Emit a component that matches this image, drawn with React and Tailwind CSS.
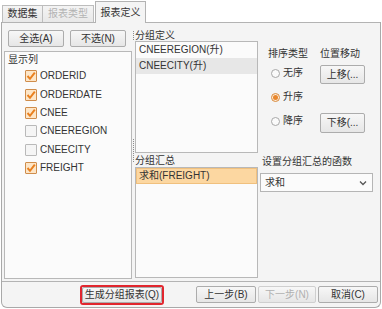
import React from 'react'

const FONT = { fontFamily: "'Liberation Sans', 'Noto Sans CJK SC', sans-serif" }

function Btn({ children, className = '', disabled }) {
  return (
    <div
      className={
        'flex items-center justify-center h-[17px] border rounded-[2px] bg-gradient-to-b from-[#f7f7f7] to-[#e6e6e6] ' +
        (disabled ? 'border-[#cfcfcf] text-[#b0b0b0] ' : 'border-[#acacac] text-[#333] ') +
        className
      }
    >
      {children}
    </div>
  )
}

function Check({ checked, label }) {
  return (
    <div className="flex items-center h-[18.4px] pl-[20px] gap-[3px]">
      {checked ? (
        <div className="w-[12px] h-[12px] border border-[#cf8d4c] bg-[#fde6c8] rounded-[1px] flex items-center justify-center">
          <svg width="10" height="10" viewBox="0 0 10 10">
            <path d="M1.5 5 L4 7.8 L8.8 1.6" stroke="#e9801f" strokeWidth="2" fill="none" />
          </svg>
        </div>
      ) : (
        <div className="w-[12px] h-[12px] border border-[#b9b9b9] bg-[#f5f5f5] rounded-[1px]" />
      )}
      <span className="text-[#333]">{label}</span>
    </div>
  )
}

function Radio({ checked, label }) {
  return (
    <div className="flex items-center h-[24px] pl-[3px] gap-[3px]">
      <div
        className={
          'w-[9px] h-[9px] rounded-full border flex items-center justify-center ' +
          (checked ? 'border-[#d98a3e] bg-[#fdebd6]' : 'border-[#a8a8a8] bg-[#fafafa]')
        }
      >
        {checked && <div className="w-[5px] h-[5px] rounded-full bg-[#e8862c]" />}
      </div>
      <span className="text-[#333]">{label}</span>
    </div>
  )
}

export default function App() {
  return (
    <div className="w-[382px] h-[309px] bg-white flex flex-col text-[10px] leading-[12px]" style={FONT}>
      {/* tabs */}
      <div className="h-[22px] flex items-end pl-[2px]">
        <div className="h-[17px] w-[41px] border border-b-0 border-[#bdbdbd] bg-gradient-to-b from-[#f4f4f4] to-[#e8e8e8] flex items-center justify-center text-[#333]">
          数据集
        </div>
        <div className="h-[17px] w-[51px] border border-l-0 border-b-0 border-[#bdbdbd] bg-gradient-to-b from-[#f4f4f4] to-[#e8e8e8] flex items-center justify-center text-[#b3b3b3]">
          报表类型
        </div>
        <div className="h-[22px] w-[51px] ml-[1px] -mb-px relative z-10 border border-b-0 border-[#b3b3b3] bg-[#f4f4f4] flex items-center justify-center text-[#333]">
          报表定义
        </div>
      </div>

      <div className="flex-1 ml-[1px] mr-[1px] mb-[1px] border-x border-b border-[#a9a9a9] rounded-b-[6px] bg-[#f4f4f4] flex flex-col">
        {/* tab panel */}
        <div className="h-[260px] border-t border-b border-[#b3b3b3] flex pt-[7px] pl-[2px]">
          {/* left column */}
          <div className="w-[128px] flex flex-col">
            <div className="flex gap-[6px] ml-[4px]">
              <Btn className="w-[56px]">全选(A)</Btn>
              <Btn className="w-[56px]">不选(N)</Btn>
            </div>
            <div className="mt-[4px] h-[228px] border border-[#b8b8b8] bg-[#fbfbfb] flex flex-col">
              <div className="pl-[3px] pt-[1px] leading-[14px] text-[#333]">显示列</div>
              <Check checked label="ORDERID" />
              <Check checked label="ORDERDATE" />
              <Check checked label="CNEE" />
              <Check label="CNEEREGION" />
              <Check label="CNEECITY" />
              <Check checked label="FREIGHT" />
            </div>
          </div>

          {/* splitter */}
          <div className="w-[3px] flex flex-col">
            <div className="ml-[1px] mt-[1px] h-[9px] border-l border-dotted border-[#8c8c8c]" />
            <div className="ml-[1px] mt-[99px] h-[23px] border-l border-dotted border-[#8c8c8c]" />
          </div>

          {/* middle column */}
          <div className="w-[123px] flex flex-col">
            <div className="h-[11px] leading-[11px] text-[#333]">分组定义</div>
            <div className="h-[112px] border border-[#b8b8b8] bg-[#fbfbfb] flex flex-col">
              <div className="h-[16px] flex items-center pl-[3px] text-[#333]">CNEEREGION(升)</div>
              <div className="h-[16px] flex items-center pl-[3px] text-[#333] bg-[#e7e7e7]">CNEECITY(升)</div>
            </div>
            <div className="h-[14px] flex items-end text-[#333]">分组汇总</div>
            <div className="h-[111px] border border-[#b8b8b8] bg-[#fbfbfb] flex flex-col">
              <div className="h-[16px] flex items-center pl-[2px] text-[#333] bg-[#fcd7a1] border border-[#f0c07e]">
                求和(FREIGHT)
              </div>
            </div>
          </div>

          {/* right column */}
          <div className="flex-1 flex flex-col">
            <div className="mt-[17px] flex">
              <div className="ml-[10px] w-[52px] flex flex-col">
                <div className="leading-[14px] text-[#333]">排序类型</div>
                <Radio label="无序" />
                <Radio checked label="升序" />
                <Radio label="降序" />
              </div>
              <div className="flex flex-col">
                <div className="leading-[14px] text-[#333]">位置移动</div>
                <Btn className="mt-[4px] w-[45px] h-[19px]">上移(...</Btn>
                <Btn className="mt-[29px] w-[45px] h-[20px]">下移(...</Btn>
              </div>
            </div>
            <div className="mt-[22px] ml-[4px] leading-[14px] text-[#333]">设置分组汇总的函数</div>
            <div className="mt-[4px] ml-[2px] w-[113px] h-[19px] border border-[#b5b5b5] bg-[#fbfbfb] flex items-center justify-between pl-[4px] pr-[5px] text-[#333]">
              <span>求和</span>
              <svg width="8" height="6" viewBox="0 0 8 6">
                <path d="M1 1.5 L4 4.5 L7 1.5" stroke="#555" strokeWidth="1.3" fill="none" />
              </svg>
            </div>
          </div>
        </div>

        {/* bottom buttons */}
        <div className="flex-1 flex items-center">
          <div className="ml-[78px] w-[84px] h-[20px] border-2 border-[#e1262e] rounded-[3px] flex">
            <Btn className="flex-1 h-full">生成分组报表(Q)</Btn>
          </div>
          <Btn className="ml-[32px] w-[60px]">上一步(B)</Btn>
          <Btn className="ml-[2px] w-[58px]" disabled>下一步(N)</Btn>
          <Btn className="ml-[2px] w-[60px]">取消(C)</Btn>
        </div>
      </div>
    </div>
  )
}
